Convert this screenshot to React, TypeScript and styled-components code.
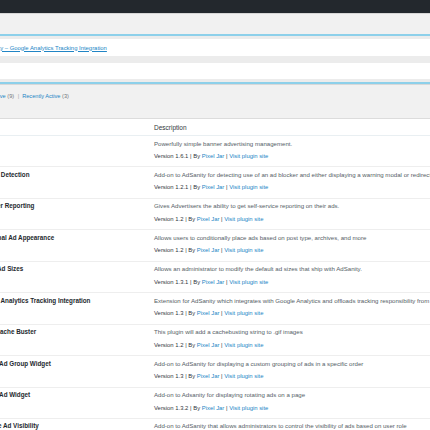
import React from 'react';
import styled, { createGlobalStyle } from 'styled-components';

const GlobalStyle = createGlobalStyle`
  html, body {
    margin: 0;
    padding: 0;
    background: #f1f1f1;
    font-family: "Liberation Sans", Arial, sans-serif;
  }
`;

const Page = styled.div`
  width: 100%;
  height: 430px;
  overflow: hidden;
`;

const AdminBar = styled.div`
  height: 13px;
  background: #23282d;
  border-bottom: 1px solid #d6d6d6;
`;

const Notice = styled.div`
  margin-top: 20px;
  display: flex;
  flex-direction: column;
  gap: 7px;
  padding: 3px 0;
  background: #ececec;
  border-top: 2px solid #8dd0ea;
  border-bottom: 2px solid #8dd0ea;
  box-shadow: 0 1px 0 #d8d8d8;
`;

const NoticeRow = styled.div<{ $h: number }>`
  height: ${(p) => p.$h}px;
  background: #fff;
  display: flex;
  align-items: center;
  white-space: nowrap;
`;

const NoticeLink = styled.a`
  margin-left: -20.5px;
  font-size: 5.9px;
  color: #2185c5;
  text-decoration: underline;
`;

const Filters = styled.ul`
  list-style: none;
  margin: 7px 0 0 -9.5px;
  padding: 0;
  display: flex;
  font-size: 5.6px;
  line-height: 10px;
  white-space: nowrap;
`;

const FilterItem = styled.li`
  display: flex;
  gap: 1.6px;
`;

const FilterLink = styled.a`
  color: #2185c5;
  text-decoration: none;
`;

const Count = styled.span`
  color: #72777c;
`;

const Sep = styled.span`
  color: #a0a5aa;
  margin: 0 3px 0 2px;
`;

const Table = styled.div`
  margin: 17px 0 0 -62px;
  width: 1000px;
  background: #fff;
  border-top: 1px solid #dcdcdc;
`;

const HeadRow = styled.div`
  display: grid;
  grid-template-columns: 211px 1fr;
  height: 16px;
  align-items: center;
  border-bottom: 1px solid #e9eff2;
  font-size: 6.5px;
  color: #32373c;
`;

const HeadCell = styled.div`
  padding: 0 5px;
`;

const Row = styled.div`
  display: grid;
  grid-template-columns: 211px 1fr;
  box-sizing: border-box;
  height: 31.44px;
  border-bottom: 1px solid #eeeeee;
`;

const TitleCell = styled.div`
  padding: 2.5px 5px 0;
  font-size: 6.3px;
  font-weight: bold;
  line-height: 10px;
  color: #23282d;
  white-space: nowrap;
`;

const DescCell = styled.div`
  padding: 2.5px 5px 0;
  white-space: nowrap;
`;

const DescText = styled.p`
  margin: 0 0 2.5px;
  font-size: 6.1px;
  line-height: 10px;
  color: #555d66;
`;

const Meta = styled.div`
  font-size: 5.9px;
  line-height: 10px;
  color: #32373c;
`;

const MetaLink = styled.a`
  color: #2185c5;
  text-decoration: none;
`;

const plugins = [
  { name: 'AdSanity', desc: 'Powerfully simple banner advertising management.', version: '1.6.1' },
  {
    name: 'AdSanity Ad Block Detection',
    desc: 'Add-on to AdSanity for detecting use of an ad blocker and either displaying a warning modal or redirecting the user to another page.',
    version: '1.2.1'
  },
  { name: 'AdSanity Advertiser Reporting', desc: 'Gives Advertisers the ability to get self-service reporting on their ads.', version: '1.2' },
  {
    name: 'AdSanity Conditional Ad Appearance',
    desc: 'Allows users to conditionally place ads based on post type, archives, and more',
    version: '1.2'
  },
  {
    name: 'AdSanity Custom Ad Sizes',
    desc: 'Allows an administrator to modify the default ad sizes that ship with AdSanity.',
    version: '1.3.1'
  },
  {
    name: 'AdSanity – Google Analytics Tracking Integration',
    desc: 'Extension for AdSanity which integrates with Google Analytics and offloads tracking responsibility from AdSanity.',
    version: '1.3'
  },
  { name: 'AdSanity Images Cache Buster', desc: 'This plugin will add a cachebusting string to .gif images', version: '1.2' },
  {
    name: 'AdSanity Rotating Ad Group Widget',
    desc: 'Add-on to AdSanity for displaying a custom grouping of ads in a specific order',
    version: '1.3'
  },
  { name: 'AdSanity Rotating Ad Widget', desc: 'Add-on to Adsanity for displaying rotating ads on a page', version: '1.3.2' },
  {
    name: 'AdSanity User Role Ad Visibility',
    desc: 'Add-on to AdSanity that allows administrators to control the visibility of ads based on user role',
    version: '1.0'
  }
];

const App: React.FC = () => {
  return (
    <Page>
      <GlobalStyle />
      <AdminBar />
      <Notice>
        <NoticeRow $h={17}>
          <NoticeLink href="#">AdSanity – Google Analytics Tracking Integration</NoticeLink>
        </NoticeRow>
        <NoticeRow $h={16} />
      </Notice>
      <Filters>
        <FilterItem>
          <FilterLink href="#">Active</FilterLink>
          <Count>(9)</Count>
          <Sep>|</Sep>
        </FilterItem>
        <FilterItem>
          <FilterLink href="#">Recently Active</FilterLink>
          <Count>(3)</Count>
        </FilterItem>
      </Filters>
      <Table>
        <HeadRow>
          <HeadCell>Plugin</HeadCell>
          <HeadCell>Description</HeadCell>
        </HeadRow>
        {plugins.map((plugin) => (
          <Row key={plugin.name}>
            <TitleCell>{plugin.name}</TitleCell>
            <DescCell>
              <DescText>{plugin.desc}</DescText>
              <Meta>
                Version {plugin.version} | By <MetaLink href="#">Pixel Jar</MetaLink> |{' '}
                <MetaLink href="#">Visit plugin site</MetaLink>
              </Meta>
            </DescCell>
          </Row>
        ))}
      </Table>
    </Page>
  );
};

export default App;
